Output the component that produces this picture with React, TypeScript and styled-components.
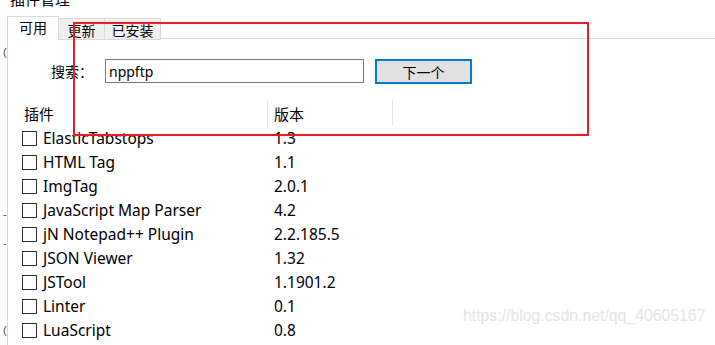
import React from "react";
import styled, { createGlobalStyle } from "styled-components";

const Global = createGlobalStyle`
  html, body { margin: 0; padding: 0; background: #fff; }
  body { width: 715px; height: 345px; overflow: hidden; }
  #root { position: relative; width: 715px; height: 345px; overflow: hidden; }
`;

const FONT = `"Noto Sans", "Noto Sans CJK SC", sans-serif`;

const Page = styled.div`
  position: relative;
  width: 715px;
  height: 345px;
  font-family: ${FONT};
  color: #000;
`;

const Title = styled.div`
  height: 16px;
  line-height: 16px;
  margin-top: -9px;
  padding-left: 10px;
  font-size: 15px;
`;

const TabStrip = styled.div`
  display: flex;
  align-items: flex-end;
  height: 24px;
  margin-top: 9px;
  padding-left: 7px;
`;

const Tab = styled.div<{ $active?: boolean; $w: number }>`
  box-sizing: border-box;
  display: flex;
  align-items: center;
  justify-content: center;
  width: ${(p) => p.$w}px;
  font-size: 14px;
  border: 1px solid #d9d9d9;
  ${(p) =>
    p.$active
      ? `
    position: relative;
    z-index: 1;
    height: 24px;
    border-bottom: none;
    background: #fff;
    padding-bottom: 3px;
  `
      : `
    margin-left: -1px;
    height: 22px;
    background: #f0f0f0;
    padding-top: 1px;
  `}
`;

const Filler = styled.div`
  flex: 1;
  height: 1px;
  background: #d9d9d9;
  align-self: flex-end;
  position: relative;
  top: -1px;
`;

const Body = styled.div`
  display: flex;
  height: 305px;
`;

const Gutter = styled.div`
  width: 7px;
  display: flex;
  flex-direction: column;
  font-family: "Liberation Sans", sans-serif;
  font-size: 11px;
  color: #5a4a20;
`;

const GutterMark = styled.span<{ $top: number }>`
  display: block;
  height: 10px;
  line-height: 10px;
  margin-top: ${(p) => p.$top}px;
  padding-left: 3px;
`;

const Panel = styled.div`
  flex: 1;
  border-left: 1px solid #d9d9d9;
  display: flex;
  flex-direction: column;
`;

const SearchRow = styled.div`
  display: flex;
  align-items: center;
  margin-top: 18px;
  padding-left: 43px;
  height: 26px;
`;

const Label = styled.div`
  width: 54px;
  font-size: 14px;
`;

const Input = styled.div`
  box-sizing: border-box;
  width: 259px;
  height: 24px;
  border: 1px solid #7a7a7a;
  padding-left: 3px;
  font-size: 14px;
  line-height: 21px;
  display: flex;
  align-items: center;
`;

const Button = styled.div`
  box-sizing: border-box;
  margin-left: 11px;
  width: 97px;
  height: 25px;
  border: 2px solid #0078d7;
  background: #e1e1e1;
  font-size: 14px;
  display: flex;
  align-items: center;
  justify-content: center;
  align-self: flex-end;
`;

const Table = styled.div`
  margin-top: 16px;
  display: grid;
  grid-template-columns: 259px 126px;
`;

const HeadCell = styled.div<{ $sep?: boolean }>`
  box-sizing: border-box;
  height: 26px;
  display: flex;
  align-items: center;
  font-size: 15px;
  padding-left: ${(p) => (p.$sep ? 6 : 16)}px;
  ${(p) =>
    p.$sep
      ? `border-left: 1px solid #e5e5e5; border-right: 1px solid #e5e5e5;`
      : ``}
`;

const NameCell = styled.div`
  height: 24px;
  display: flex;
  align-items: center;
  padding-left: 14px;
  gap: 6px;
  font-size: 15.5px;
  white-space: nowrap;
`;

const Check = styled.span`
  box-sizing: border-box;
  width: 15px;
  height: 15px;
  border: 1px solid #333;
  background: #fff;
  flex: none;
`;

const VerCell = styled.div`
  height: 24px;
  display: flex;
  align-items: center;
  padding-left: 7px;
  font-size: 15.5px;
`;

const Annotation = styled.div`
  position: absolute;
  left: 73px;
  top: 31px;
  width: 516px;
  height: 114px;
  box-sizing: border-box;
  border: 2px solid #ed1c24;
  pointer-events: none;
`;

const Watermark = styled.div`
  position: absolute;
  left: 463px;
  top: 316px;
  font-family: "Liberation Sans", sans-serif;
  font-size: 15.8px;
  color: #e4e4e4;
  white-space: nowrap;
`;

const plugins: [string, string][] = [
  ["ElasticTabstops", "1.3"],
  ["HTML Tag", "1.1"],
  ["ImgTag", "2.0.1"],
  ["JavaScript Map Parser", "4.2"],
  ["jN Notepad++ Plugin", "2.2.185.5"],
  ["JSON Viewer", "1.32"],
  ["JSTool", "1.1901.2"],
  ["Linter", "0.1"],
  ["LuaScript", "0.8"],
];

export default function App() {
  return (
    <Page>
      <Global />
      <Title>插件管理</Title>
      <TabStrip>
        <Tab $active $w={52}>可用</Tab>
        <Tab $w={47}>更新</Tab>
        <Tab $w={57}>已安装</Tab>
        <Filler />
      </TabStrip>
      <Body>
        <Gutter>
          <GutterMark $top={7}>(</GutterMark>
          <GutterMark $top={152}>-</GutterMark>
          <GutterMark $top={19}>-</GutterMark>
          <GutterMark $top={77}>(</GutterMark>
        </Gutter>
        <Panel>
          <SearchRow>
            <Label>搜索：</Label>
            <Input>nppftp</Input>
            <Button>下一个</Button>
          </SearchRow>
          <Table>
            <HeadCell>插件</HeadCell>
            <HeadCell $sep>版本</HeadCell>
            {plugins.map(([name, ver]) => (
              <React.Fragment key={name}>
                <NameCell>
                  <Check />
                  {name}
                </NameCell>
                <VerCell>{ver}</VerCell>
              </React.Fragment>
            ))}
          </Table>
        </Panel>
      </Body>
      <Annotation />
      <Watermark>https://blog.csdn.net/qq_40605167</Watermark>
    </Page>
  );
}
